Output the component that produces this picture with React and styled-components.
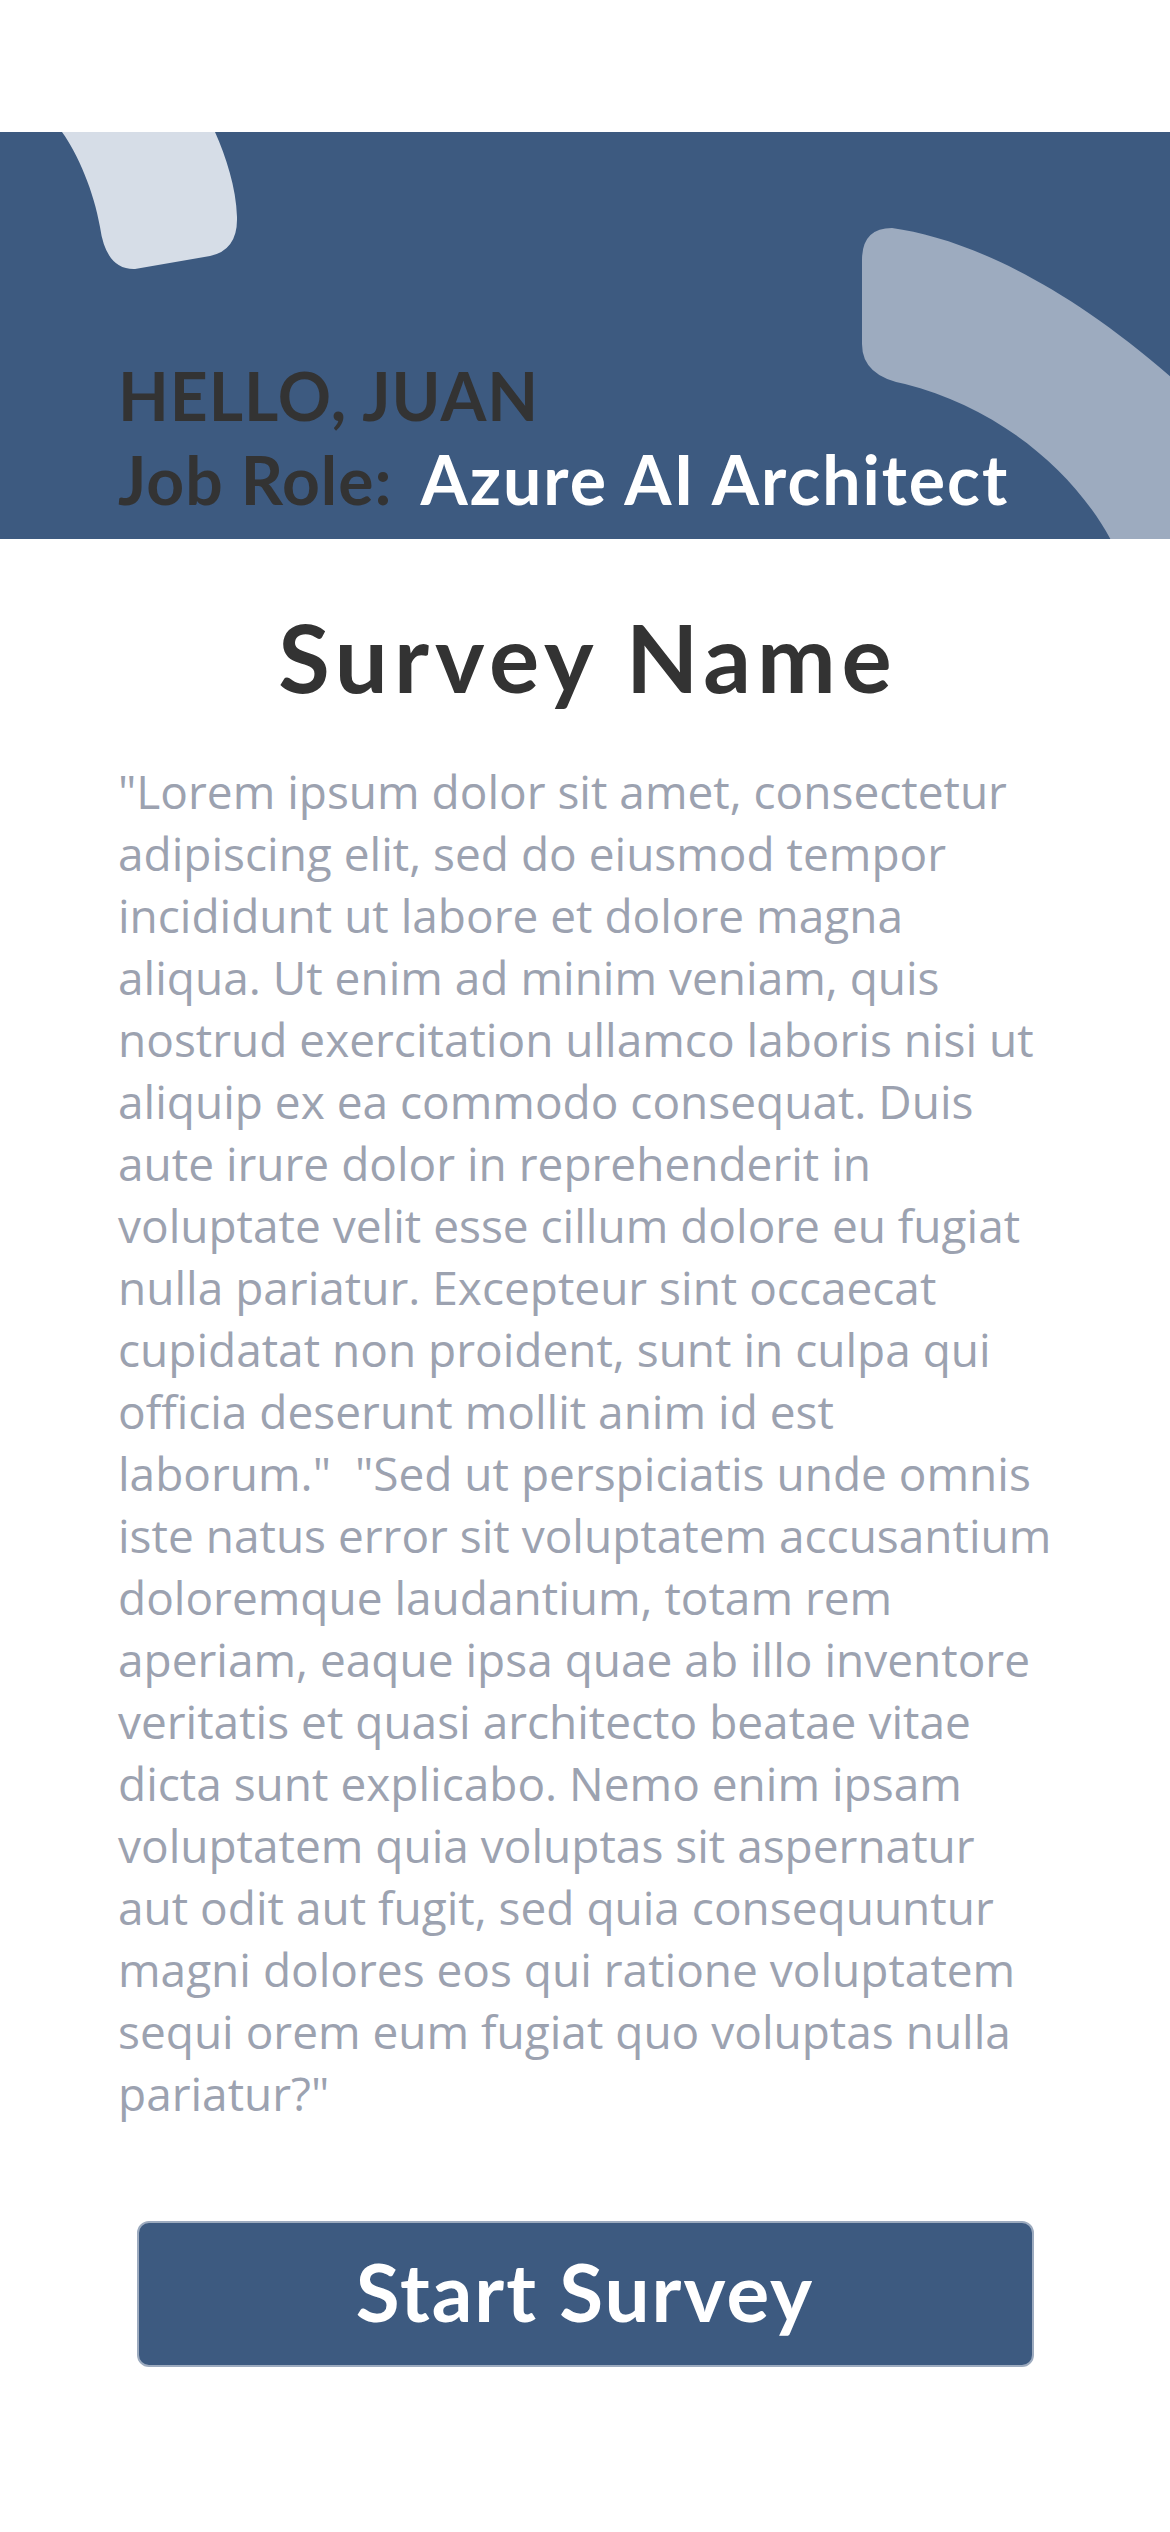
import React from "react";
import styled, { createGlobalStyle } from "styled-components";

const Global = createGlobalStyle`
  html, body { margin: 0; padding: 0; background: #ffffff; }
  * { box-sizing: border-box; }
`;

const Page = styled.div`
  width: 1170px;
  min-height: 2532px;
  padding-top: 132px;
  background: #ffffff;
  display: flex;
  flex-direction: column;
`;

const Banner = styled.header`
  position: relative;
  height: 407px;
  background: #3d5a80;
  overflow: hidden;
  display: flex;
  flex-direction: column;
  justify-content: flex-end;
  padding: 0 0 18px 118px;
`;

const Decor = styled.svg`
  position: absolute;
  inset: 0;
  width: 100%;
  height: 100%;
  pointer-events: none;
`;

const GreetLine = styled.div`
  position: relative;
  display: flex;
  align-items: baseline;
  gap: 28px;
  font-family: "Lato", "Open Sans", sans-serif;
  font-weight: 700;
  font-size: 66px;
  line-height: 83px;
  letter-spacing: 1px;
  color: #333333;
  white-space: nowrap;
`;

const RoleValue = styled.span`
  color: #ffffff;
  font-size: 68px;
  letter-spacing: 2px;
`;

const Title = styled.h1`
  margin: 60px 0 0;
  text-align: center;
  font-family: "Lato", "Open Sans", sans-serif;
  font-weight: 700;
  font-size: 94px;
  line-height: 115px;
  letter-spacing: 6px;
  padding-left: 6px;
  color: #333333;
`;

const Description = styled.p`
  margin: 46px 0 0;
  padding: 0 0 0 118px;
  font-family: "Open Sans", sans-serif;
  font-weight: 400;
  font-size: 46px;
  line-height: 62px;
  color: #9ca2b0;
`;

const Line = styled.span`
  display: block;
  white-space: pre;
`;

const StartButton = styled.button`
  align-self: center;
  margin-top: 97px;
  width: 897px;
  height: 146px;
  border: 2px solid #9dabbf;
  border-radius: 12px;
  background: #3d5a80;
  color: #ffffff;
  font-family: "Lato", "Open Sans", sans-serif;
  font-weight: 700;
  font-size: 80px;
  letter-spacing: 2px;
  cursor: pointer;
  display: flex;
  align-items: center;
  justify-content: center;
  padding: 0 0 6px;
`;

const lines = [
  '"Lorem ipsum dolor sit amet, consectetur',
  "adipiscing elit, sed do eiusmod tempor",
  "incididunt ut labore et dolore magna",
  "aliqua. Ut enim ad minim veniam, quis",
  "nostrud exercitation ullamco laboris nisi ut",
  "aliquip ex ea commodo consequat. Duis",
  "aute irure dolor in reprehenderit in",
  "voluptate velit esse cillum dolore eu fugiat",
  "nulla pariatur. Excepteur sint occaecat",
  "cupidatat non proident, sunt in culpa qui",
  "officia deserunt mollit anim id est",
  'laborum."  "Sed ut perspiciatis unde omnis',
  "iste natus error sit voluptatem accusantium",
  "doloremque laudantium, totam rem",
  "aperiam, eaque ipsa quae ab illo inventore",
  "veritatis et quasi architecto beatae vitae",
  "dicta sunt explicabo. Nemo enim ipsam",
  "voluptatem quia voluptas sit aspernatur",
  "aut odit aut fugit, sed quia consequuntur",
  "magni dolores eos qui ratione voluptatem",
  "sequi orem eum fugiat quo voluptas nulla",
  'pariatur?"',
];

export default function App() {
  return (
    <>
      <Global />
      <Page>
        <Banner>
          <Decor viewBox="0 0 1170 407" preserveAspectRatio="none" aria-hidden="true">
            <path
              d="M62,0 C78,22 94,60 100,95 Q106,138 135,137 L210,124 Q238,118 237,85 C236,55 226,25 215,0 Z"
              fill="#d6dde7"
            />
            <path
              d="M862,128 Q862,96 892,96 C965,106 1070,152 1190,262 L1190,420 L1117,420 C1080,342 1000,276 905,252 Q862,244 862,212 Z"
              fill="#9dabbf"
            />
          </Decor>
          <GreetLine>HELLO, JUAN</GreetLine>
          <GreetLine>
            <span>Job Role:</span>
            <RoleValue>Azure AI Architect</RoleValue>
          </GreetLine>
        </Banner>
        <Title>Survey Name</Title>
        <Description>
          {lines.map((l, i) => (
            <Line key={i}>{l}</Line>
          ))}
        </Description>
        <StartButton type="button">Start Survey</StartButton>
      </Page>
    </>
  );
}
